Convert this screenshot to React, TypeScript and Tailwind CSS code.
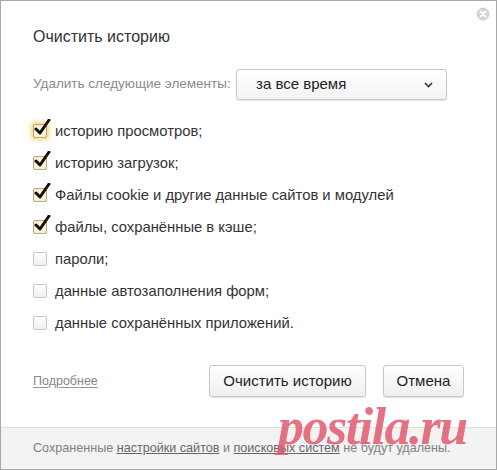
import React from "react";

const Check = ({ checked, focus }: { checked: boolean; focus?: boolean }) => (
  <div className="relative w-[14px] h-[14px] shrink-0">
    <div
      className={
        "absolute inset-0 rounded-[2px] border " +
        (checked ? "border-[#b8a878] bg-[#f6f0d8]" : "border-[#c4c4c4] bg-gradient-to-b from-white to-[#f0f0f0]") +
        (focus ? " shadow-[0_0_4px_2px_#f5d77a]" : "")
      }
    />
    {checked && (
      <svg className="absolute left-[1px] top-[-5px]" width="17" height="18" viewBox="0 0 17 18">
        <path d="M2 10 L6 14 L15 1" fill="none" stroke="#111" strokeWidth="3" strokeLinecap="round" strokeLinejoin="round" />
      </svg>
    )}
  </div>
);

const items: { label: string; checked: boolean; focus?: boolean }[] = [
  { label: "историю просмотров;", checked: true, focus: true },
  { label: "историю загрузок;", checked: true },
  { label: "Файлы cookie и другие данные сайтов и модулей", checked: true },
  { label: "файлы, сохранённые в кэше;", checked: true },
  { label: "пароли;", checked: false },
  { label: "данные автозаполнения форм;", checked: false },
  { label: "данные сохранённых приложений.", checked: false },
];

export default function App() {
  return (
    <div
      className="relative w-[497px] h-[470px] bg-white border border-[#a8a8a8] flex flex-col overflow-hidden"
      style={{ fontFamily: '"Liberation Sans", Arial, sans-serif' }}
    >
      <div className="absolute right-[6px] top-[6px]">
        <svg width="14" height="14" viewBox="0 0 14 14">
          <circle cx="7" cy="7" r="6.5" fill="#d4d4d4" />
          <path d="M4.5 4.5 L9.5 9.5 M9.5 4.5 L4.5 9.5" stroke="#fff" strokeWidth="1.8" strokeLinecap="round" />
        </svg>
      </div>
      <div className="flex-1 flex flex-col px-[32px]">
        <div className="pt-[26px] text-[16px] leading-[20px] text-[#333] whitespace-nowrap">Очистить историю</div>
        <div className="mt-[22px] flex items-center">
          <span className="text-[13.5px] text-[#8a8a8a] w-[203px] whitespace-nowrap">Удалить следующие элементы:</span>
          <div className="w-[211px] h-[31px] rounded-[3px] border border-[#c8c8c8] bg-gradient-to-b from-white to-[#f3f3f3] shadow-[0_1px_1px_rgba(0,0,0,0.12)] flex items-center justify-between pl-[19px] pr-[13px]">
            <span className="text-[15px] text-[#222] whitespace-nowrap">за все время</span>
            <svg width="9" height="6" viewBox="0 0 9 6">
              <path d="M1 1 L4.5 4.5 L8 1" fill="none" stroke="#333" strokeWidth="1.6" />
            </svg>
          </div>
        </div>
        <div className="mt-[15px] flex flex-col">
          {items.map((it) => (
            <div key={it.label} className="h-[32px] flex items-center gap-[8px]">
              <Check checked={it.checked} focus={it.focus} />
              <span className="text-[14.8px] text-[#333] whitespace-nowrap">{it.label}</span>
            </div>
          ))}
        </div>
        <div className="mt-[26px] flex items-center">
          <span className="text-[12.5px] text-[#888] underline underline-offset-2 decoration-[#999] whitespace-nowrap">Подробнее</span>
          <div className="ml-auto flex gap-[17px]">
            <div className="h-[32px] w-[157px] rounded-[3px] border border-[#c8c8c8] bg-gradient-to-b from-white to-[#f0f0f0] shadow-[0_1px_1px_rgba(0,0,0,0.12)] flex items-center justify-center text-[15px] text-[#222] whitespace-nowrap">
              Очистить историю
            </div>
            <div className="h-[32px] w-[81px] rounded-[3px] border border-[#c8c8c8] bg-gradient-to-b from-white to-[#f0f0f0] shadow-[0_1px_1px_rgba(0,0,0,0.12)] flex items-center justify-center text-[15px] text-[#222] whitespace-nowrap">
              Отмена
            </div>
          </div>
        </div>
      </div>
      <div className="h-[42px] bg-[#f3f3f3] border-t border-[#dedede] px-[32px] flex items-center text-[12.6px] text-[#808080] whitespace-nowrap">
        <span>
          Сохраненные <span className="underline text-[#666]">настройки сайтов</span> и{" "}
          <span className="underline text-[#666]">поисковых систем</span> не будут удалены.
        </span>
      </div>
      <div
        className="absolute left-[277px] top-[396px] text-[52px] leading-[60px] font-bold italic text-[rgba(222,80,100,0.8)] tracking-[-1.5px] whitespace-nowrap pointer-events-none"
        style={{ fontFamily: '"Liberation Serif", serif' }}
      >
        postila.ru
      </div>
    </div>
  );
}
